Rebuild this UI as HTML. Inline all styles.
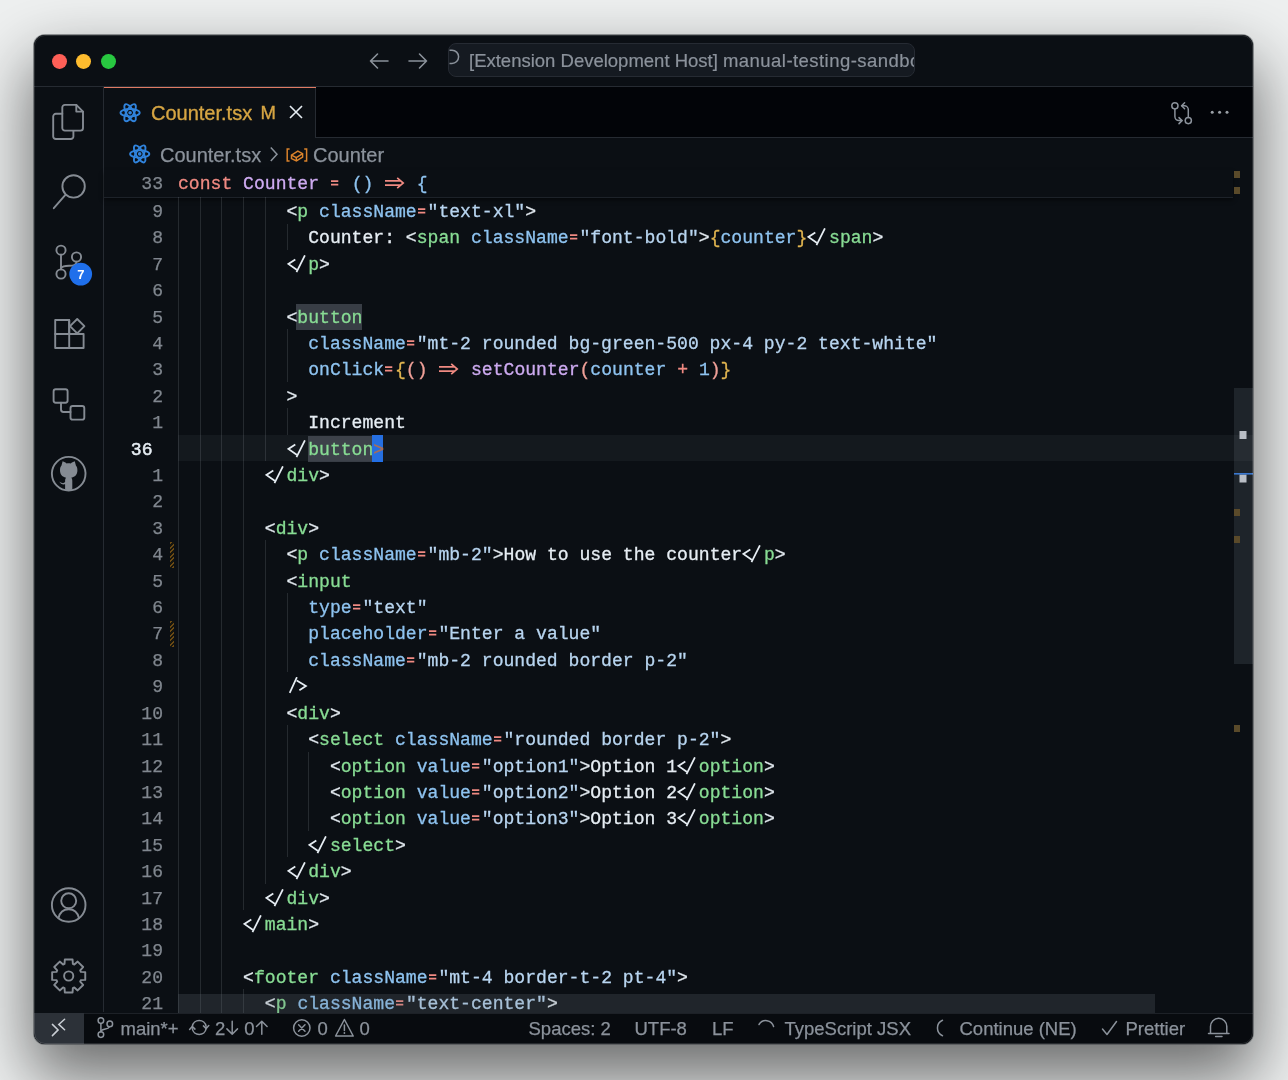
<!DOCTYPE html>
<html><head><meta charset="utf-8"><style>
html,body{margin:0;padding:0;}
body{width:1288px;height:1080px;overflow:hidden;position:relative;
 background:#eef0f0;
 font-family:"Liberation Sans",sans-serif;}
.win{will-change:transform;position:absolute;left:34px;top:35px;width:1219px;height:1009px;border-radius:11px;overflow:hidden;background:#0b0f14;
 box-shadow:0 0 0 1px rgba(60,64,68,0.5), 0 30px 65px 4px rgba(0,0,0,0.55);}
.edge{position:absolute;left:0;top:0;width:1217px;height:1007px;border:1px solid rgba(255,255,255,0.13);border-radius:11px;pointer-events:none;}
.abs{position:absolute;}
.title{position:absolute;left:0;top:0;width:1219px;height:51px;background:#0b0f14;border-bottom:1px solid #262b32;}
.tl{position:absolute;top:18.8px;width:14.8px;height:14.8px;border-radius:50%;}
.search{position:absolute;left:414px;top:8px;width:465px;height:32px;border:1px solid #262b33;border-radius:8px;background:#151a21;overflow:hidden;}
.search .txt{-webkit-text-stroke:0.2px currentColor;position:absolute;left:20px;top:6px;font-size:18.5px;color:#8b929b;white-space:nowrap;letter-spacing:0px;}
.abar{position:absolute;left:0;top:52px;width:69px;height:925px;background:#0b0f14;border-right:1px solid #262b32;}
.tabs{position:absolute;left:70px;top:52px;width:1149px;height:50px;background:#020408;border-bottom:1px solid #262b32;}
.tab{position:absolute;left:0;top:0;width:211px;height:51px;background:#0b0f14;border-right:1px solid #262b32;}
.tab .top{position:absolute;left:0;top:0;width:212px;height:1.2px;background:#e07a63;}
.crumb{-webkit-text-stroke:0.25px currentColor;position:absolute;left:70px;top:103px;font-size:20px;color:#8b929b;white-space:nowrap;}
.editor{position:absolute;left:70px;top:103px;width:1149px;height:874px;background:#0b0f14;overflow:hidden;}
.row{position:absolute;left:0;width:1219px;height:26.41px;}
.row.cur .hl{position:absolute;left:144px;top:0;width:1075px;height:26.41px;background:rgba(110,118,129,0.10);}
.ln{-webkit-text-stroke:0.25px currentColor;position:absolute;top:1.8px;left:0;width:129px;text-align:right;font-family:"Liberation Mono",monospace;font-size:18.08px;line-height:26.41px;color:#80878f;}
.ln.act{left:-10.5px;color:#e6edf3;-webkit-text-stroke:0.5px currentColor;}
.code{-webkit-text-stroke:0.3px currentColor;position:absolute;top:1.8px;font-family:"Liberation Mono",monospace;font-size:18.08px;line-height:26.41px;white-space:pre;}
.g{position:absolute;top:0;width:1px;height:26.41px;background:rgba(230,237,243,0.12);}
.eq{position:relative;color:transparent;-webkit-text-stroke:0;}
.eq svg{position:absolute;left:0;top:0;}
.status{position:absolute;left:0;top:977.6px;width:1219px;height:31.4px;background:#080b0f;border-top:1px solid #1d2127;font-size:18.5px;color:#8b929b;white-space:nowrap;}
.status span{position:absolute;top:4px;-webkit-text-stroke:0.25px currentColor;}
.ico{position:absolute;}
.ov{position:absolute;left:-34px;top:-35px;pointer-events:none;}
.tabtxt{-webkit-text-stroke:0.35px currentColor;position:absolute;left:47px;top:15px;font-size:20px;color:#d6a543;white-space:nowrap;}
.tabm{-webkit-text-stroke:0.35px currentColor;position:absolute;left:156.5px;top:15.2px;font-size:18.5px;color:#d6a543;}
.crumb{-webkit-text-stroke:0.25px currentColor;position:absolute;top:108.5px;font-size:20px;color:#8b929b;white-space:nowrap;}
.sticky{position:absolute;left:70px;top:134.5px;width:1129px;height:27px;background:#0b0f14;box-shadow:0 1px 0 #1d2229, 0 3px 4px rgba(0,0,0,0.5);}
.sticky .code, .sticky .ln{top:1.8px;}
.sticky .ln{left:-70px;}
.sticky .code{margin-left:-70px;}
.wordhl{position:absolute;height:26.41px;background:rgba(110,118,129,0.45);}
.cursor{position:absolute;width:11px;height:26.41px;background:#1f6feb;}
.hscroll{position:absolute;left:144px;top:959px;width:977px;height:18.5px;background:rgba(110,118,129,0.22);}
.vscroll{position:absolute;left:1199.7px;top:352.8px;width:19.3px;height:276px;background:rgba(110,118,129,0.2);}
.remote{position:absolute;left:0;top:-1px;width:49.6px;height:33px;background:#2c3138;}

.dirty{position:absolute;left:136px;width:4.4px;height:26.6px;background:repeating-linear-gradient(-45deg,#6b4a14 0px,#6b4a14 1.6px,#15150f 1.6px,#15150f 3.2px);}

</style></head><body>
<div class="win">
 <div class="title">
  <div class="tl" style="left:18px;background:#fe5f57"></div>
  <div class="tl" style="left:42.3px;background:#febc2e"></div>
  <div class="tl" style="left:66.9px;background:#28c840"></div>
  <div class="search">
   <div class="txt">[Extension Development Host] <span style="letter-spacing:0.45px">manual-testing-sandbox</span></div>
  </div>
 </div>
 <div class="abar"></div>
 <div class="tabs">
  <div class="tab"><div class="top"></div>
   <span class="tabtxt">Counter.tsx</span><span class="tabm">M</span>
  </div>
 </div>
 <div class="editor"></div>
 <span class="crumb" style="left:126px">Counter.tsx</span>
 <span class="crumb" style="left:279px">Counter</span>
 <div class="sticky">
  <span class="ln">33</span><span class="code" style="left:144px"><span style="color:#f08a82">const</span><span style="color:#e6edf3"> </span><span style="color:#cdaaf0">Counter</span><span style="color:#e6edf3"> </span><span class="eq">=<svg width="11" height="20" viewBox="0 0 11 20"><path d="M1 7.1H8.3M1 10.7H8.3" fill="none" stroke="#f08a82" stroke-width="1.7"/></svg></span><span style="color:#e6edf3"> </span><span style="color:#8ec3f0">(</span><span style="color:#8ec3f0">)</span><span style="color:#e6edf3"> </span><span class="eq">=&gt;<svg width="22" height="20" viewBox="0 0 22 20"><path d="M1 6.9H16.2M1 11.1H16.2M13.2 3.9L19.2 9L13.2 14.1" fill="none" stroke="#f08a82" stroke-width="1.7"/></svg></span><span style="color:#e6edf3"> </span><span style="color:#8ec3f0">{</span></span>
 </div>
 <div class="wordhl" style="left:262.3px;top:269px;width:65.3px;height:25.8px"></div>
 <div class="wordhl" style="left:274px;top:401px;width:64px;height:25.8px"></div>
 <div class="cursor" style="left:337.8px;top:399.6px;width:11.6px;height:27.4px"></div>
 <div class="row" style="top:162.1px"><i class="g" style="left:144px"></i><i class="g" style="left:165.7px"></i><i class="g" style="left:187.4px"></i><i class="g" style="left:209.1px"></i><i class="g" style="left:230.8px"></i><span class="ln">9</span><span class="code" style="left:252.5px"><span style="color:#e6edf3">&lt;</span><span style="color:#88dc94">p</span><span style="color:#e6edf3"> </span><span style="color:#8ec3f0">className</span><span class="eq">=<svg width="11" height="20" viewBox="0 0 11 20"><path d="M1 7.1H8.3M1 10.7H8.3" fill="none" stroke="#f08a82" stroke-width="1.7"/></svg></span><span style="color:#b8d5f0">&quot;text-xl&quot;</span><span style="color:#e6edf3">&gt;</span></span></div>
<div class="row" style="top:188.51px"><i class="g" style="left:144px"></i><i class="g" style="left:165.7px"></i><i class="g" style="left:187.4px"></i><i class="g" style="left:209.1px"></i><i class="g" style="left:230.8px"></i><i class="g" style="left:252.5px"></i><span class="ln">8</span><span class="code" style="left:274.2px"><span style="color:#e6edf3">Counter: </span><span style="color:#e6edf3">&lt;</span><span style="color:#88dc94">span</span><span style="color:#e6edf3"> </span><span style="color:#8ec3f0">className</span><span class="eq">=<svg width="11" height="20" viewBox="0 0 11 20"><path d="M1 7.1H8.3M1 10.7H8.3" fill="none" stroke="#f08a82" stroke-width="1.7"/></svg></span><span style="color:#b8d5f0">&quot;font-bold&quot;</span><span style="color:#e6edf3">&gt;</span><span style="color:#e0b450">{</span><span style="color:#8ec3f0">counter</span><span style="color:#e0b450">}</span><span class="eq">&lt;/<svg width="22" height="20" viewBox="0 0 22 20"><path d="M8.3 4.6L1.4 8.9L9.7 14.7M9.5 17.1L17.9 0.3" fill="none" stroke="#e6edf3" stroke-width="1.75" stroke-linejoin="miter"/></svg></span><span style="color:#88dc94">span</span><span style="color:#e6edf3">&gt;</span></span></div>
<div class="row" style="top:214.92px"><i class="g" style="left:144px"></i><i class="g" style="left:165.7px"></i><i class="g" style="left:187.4px"></i><i class="g" style="left:209.1px"></i><i class="g" style="left:230.8px"></i><span class="ln">7</span><span class="code" style="left:252.5px"><span class="eq">&lt;/<svg width="22" height="20" viewBox="0 0 22 20"><path d="M8.3 4.6L1.4 8.9L9.7 14.7M9.5 17.1L17.9 0.3" fill="none" stroke="#e6edf3" stroke-width="1.75" stroke-linejoin="miter"/></svg></span><span style="color:#88dc94">p</span><span style="color:#e6edf3">&gt;</span></span></div>
<div class="row" style="top:241.33px"><i class="g" style="left:144px"></i><i class="g" style="left:165.7px"></i><i class="g" style="left:187.4px"></i><i class="g" style="left:209.1px"></i><i class="g" style="left:230.8px"></i><span class="ln">6</span><span class="code" style="left:144px"></span></div>
<div class="row" style="top:267.74px"><i class="g" style="left:144px"></i><i class="g" style="left:165.7px"></i><i class="g" style="left:187.4px"></i><i class="g" style="left:209.1px"></i><i class="g" style="left:230.8px"></i><span class="ln">5</span><span class="code" style="left:252.5px"><span style="color:#e6edf3">&lt;</span><span style="color:#88dc94">button</span></span></div>
<div class="row" style="top:294.15px"><i class="g" style="left:144px"></i><i class="g" style="left:165.7px"></i><i class="g" style="left:187.4px"></i><i class="g" style="left:209.1px"></i><i class="g" style="left:230.8px"></i><i class="g" style="left:252.5px"></i><span class="ln">4</span><span class="code" style="left:274.2px"><span style="color:#8ec3f0">className</span><span class="eq">=<svg width="11" height="20" viewBox="0 0 11 20"><path d="M1 7.1H8.3M1 10.7H8.3" fill="none" stroke="#f08a82" stroke-width="1.7"/></svg></span><span style="color:#b8d5f0">&quot;mt-2 rounded bg-green-500 px-4 py-2 text-white&quot;</span></span></div>
<div class="row" style="top:320.56px"><i class="g" style="left:144px"></i><i class="g" style="left:165.7px"></i><i class="g" style="left:187.4px"></i><i class="g" style="left:209.1px"></i><i class="g" style="left:230.8px"></i><i class="g" style="left:252.5px"></i><span class="ln">3</span><span class="code" style="left:274.2px"><span style="color:#8ec3f0">onClick</span><span class="eq">=<svg width="11" height="20" viewBox="0 0 11 20"><path d="M1 7.1H8.3M1 10.7H8.3" fill="none" stroke="#f08a82" stroke-width="1.7"/></svg></span><span style="color:#e0b450">{</span><span style="color:#f0a098">(</span><span style="color:#f0a098">)</span><span style="color:#e6edf3"> </span><span class="eq">=&gt;<svg width="22" height="20" viewBox="0 0 22 20"><path d="M1 6.9H16.2M1 11.1H16.2M13.2 3.9L19.2 9L13.2 14.1" fill="none" stroke="#f08a82" stroke-width="1.7"/></svg></span><span style="color:#e6edf3"> </span><span style="color:#cdaaf0">setCounter</span><span style="color:#f0a098">(</span><span style="color:#8ec3f0">counter</span><span style="color:#e6edf3"> </span><span style="color:#f08a82">+</span><span style="color:#e6edf3"> </span><span style="color:#8ec3f0">1</span><span style="color:#f0a098">)</span><span style="color:#e0b450">}</span></span></div>
<div class="row" style="top:346.97px"><i class="g" style="left:144px"></i><i class="g" style="left:165.7px"></i><i class="g" style="left:187.4px"></i><i class="g" style="left:209.1px"></i><i class="g" style="left:230.8px"></i><span class="ln">2</span><span class="code" style="left:252.5px"><span style="color:#e6edf3">&gt;</span></span></div>
<div class="row" style="top:373.38px"><i class="g" style="left:144px"></i><i class="g" style="left:165.7px"></i><i class="g" style="left:187.4px"></i><i class="g" style="left:209.1px"></i><i class="g" style="left:230.8px"></i><i class="g" style="left:252.5px"></i><span class="ln">1</span><span class="code" style="left:274.2px"><span style="color:#e6edf3">Increment</span></span></div>
<div class="row cur" style="top:399.79px"><i class="hl"></i><i class="g" style="left:144px"></i><i class="g" style="left:165.7px"></i><i class="g" style="left:187.4px"></i><i class="g" style="left:209.1px"></i><i class="g" style="left:230.8px"></i><span class="ln act">36</span><span class="code" style="left:252.5px"><span class="eq">&lt;/<svg width="22" height="20" viewBox="0 0 22 20"><path d="M8.3 4.6L1.4 8.9L9.7 14.7M9.5 17.1L17.9 0.3" fill="none" stroke="#e6edf3" stroke-width="1.75" stroke-linejoin="miter"/></svg></span><span style="color:#88dc94">button</span><span style="color:#b07050">&gt;</span></span></div>
<div class="row" style="top:426.2px"><i class="g" style="left:144px"></i><i class="g" style="left:165.7px"></i><i class="g" style="left:187.4px"></i><i class="g" style="left:209.1px"></i><span class="ln">1</span><span class="code" style="left:230.8px"><span class="eq">&lt;/<svg width="22" height="20" viewBox="0 0 22 20"><path d="M8.3 4.6L1.4 8.9L9.7 14.7M9.5 17.1L17.9 0.3" fill="none" stroke="#e6edf3" stroke-width="1.75" stroke-linejoin="miter"/></svg></span><span style="color:#88dc94">div</span><span style="color:#e6edf3">&gt;</span></span></div>
<div class="row" style="top:452.61px"><i class="g" style="left:144px"></i><i class="g" style="left:165.7px"></i><i class="g" style="left:187.4px"></i><i class="g" style="left:209.1px"></i><span class="ln">2</span><span class="code" style="left:144px"></span></div>
<div class="row" style="top:479.02px"><i class="g" style="left:144px"></i><i class="g" style="left:165.7px"></i><i class="g" style="left:187.4px"></i><i class="g" style="left:209.1px"></i><span class="ln">3</span><span class="code" style="left:230.8px"><span style="color:#e6edf3">&lt;</span><span style="color:#88dc94">div</span><span style="color:#e6edf3">&gt;</span></span></div>
<div class="row" style="top:505.43px"><i class="g" style="left:144px"></i><i class="g" style="left:165.7px"></i><i class="g" style="left:187.4px"></i><i class="g" style="left:209.1px"></i><i class="g" style="left:230.8px"></i><span class="ln">4</span><span class="code" style="left:252.5px"><span style="color:#e6edf3">&lt;</span><span style="color:#88dc94">p</span><span style="color:#e6edf3"> </span><span style="color:#8ec3f0">className</span><span class="eq">=<svg width="11" height="20" viewBox="0 0 11 20"><path d="M1 7.1H8.3M1 10.7H8.3" fill="none" stroke="#f08a82" stroke-width="1.7"/></svg></span><span style="color:#b8d5f0">&quot;mb-2&quot;</span><span style="color:#e6edf3">&gt;</span><span style="color:#e6edf3">How to use the counter</span><span class="eq">&lt;/<svg width="22" height="20" viewBox="0 0 22 20"><path d="M8.3 4.6L1.4 8.9L9.7 14.7M9.5 17.1L17.9 0.3" fill="none" stroke="#e6edf3" stroke-width="1.75" stroke-linejoin="miter"/></svg></span><span style="color:#88dc94">p</span><span style="color:#e6edf3">&gt;</span></span></div>
<div class="row" style="top:531.84px"><i class="g" style="left:144px"></i><i class="g" style="left:165.7px"></i><i class="g" style="left:187.4px"></i><i class="g" style="left:209.1px"></i><i class="g" style="left:230.8px"></i><span class="ln">5</span><span class="code" style="left:252.5px"><span style="color:#e6edf3">&lt;</span><span style="color:#88dc94">input</span></span></div>
<div class="row" style="top:558.25px"><i class="g" style="left:144px"></i><i class="g" style="left:165.7px"></i><i class="g" style="left:187.4px"></i><i class="g" style="left:209.1px"></i><i class="g" style="left:230.8px"></i><i class="g" style="left:252.5px"></i><span class="ln">6</span><span class="code" style="left:274.2px"><span style="color:#8ec3f0">type</span><span class="eq">=<svg width="11" height="20" viewBox="0 0 11 20"><path d="M1 7.1H8.3M1 10.7H8.3" fill="none" stroke="#f08a82" stroke-width="1.7"/></svg></span><span style="color:#b8d5f0">&quot;text&quot;</span></span></div>
<div class="row" style="top:584.66px"><i class="g" style="left:144px"></i><i class="g" style="left:165.7px"></i><i class="g" style="left:187.4px"></i><i class="g" style="left:209.1px"></i><i class="g" style="left:230.8px"></i><i class="g" style="left:252.5px"></i><span class="ln">7</span><span class="code" style="left:274.2px"><span style="color:#8ec3f0">placeholder</span><span class="eq">=<svg width="11" height="20" viewBox="0 0 11 20"><path d="M1 7.1H8.3M1 10.7H8.3" fill="none" stroke="#f08a82" stroke-width="1.7"/></svg></span><span style="color:#b8d5f0">&quot;Enter a value&quot;</span></span></div>
<div class="row" style="top:611.07px"><i class="g" style="left:144px"></i><i class="g" style="left:165.7px"></i><i class="g" style="left:187.4px"></i><i class="g" style="left:209.1px"></i><i class="g" style="left:230.8px"></i><i class="g" style="left:252.5px"></i><span class="ln">8</span><span class="code" style="left:274.2px"><span style="color:#8ec3f0">className</span><span class="eq">=<svg width="11" height="20" viewBox="0 0 11 20"><path d="M1 7.1H8.3M1 10.7H8.3" fill="none" stroke="#f08a82" stroke-width="1.7"/></svg></span><span style="color:#b8d5f0">&quot;mb-2 rounded border p-2&quot;</span></span></div>
<div class="row" style="top:637.48px"><i class="g" style="left:144px"></i><i class="g" style="left:165.7px"></i><i class="g" style="left:187.4px"></i><i class="g" style="left:209.1px"></i><i class="g" style="left:230.8px"></i><span class="ln">9</span><span class="code" style="left:252.5px"><span class="eq">/&gt;<svg width="22" height="20" viewBox="0 0 22 20"><path d="M2.7 15.9L9.9 0.2M9.7 3.6L18.9 9.1L12.4 13.2" fill="none" stroke="#e6edf3" stroke-width="1.75"/></svg></span></span></div>
<div class="row" style="top:663.89px"><i class="g" style="left:144px"></i><i class="g" style="left:165.7px"></i><i class="g" style="left:187.4px"></i><i class="g" style="left:209.1px"></i><i class="g" style="left:230.8px"></i><span class="ln">10</span><span class="code" style="left:252.5px"><span style="color:#e6edf3">&lt;</span><span style="color:#88dc94">div</span><span style="color:#e6edf3">&gt;</span></span></div>
<div class="row" style="top:690.3px"><i class="g" style="left:144px"></i><i class="g" style="left:165.7px"></i><i class="g" style="left:187.4px"></i><i class="g" style="left:209.1px"></i><i class="g" style="left:230.8px"></i><i class="g" style="left:252.5px"></i><span class="ln">11</span><span class="code" style="left:274.2px"><span style="color:#e6edf3">&lt;</span><span style="color:#88dc94">select</span><span style="color:#e6edf3"> </span><span style="color:#8ec3f0">className</span><span class="eq">=<svg width="11" height="20" viewBox="0 0 11 20"><path d="M1 7.1H8.3M1 10.7H8.3" fill="none" stroke="#f08a82" stroke-width="1.7"/></svg></span><span style="color:#b8d5f0">&quot;rounded border p-2&quot;</span><span style="color:#e6edf3">&gt;</span></span></div>
<div class="row" style="top:716.71px"><i class="g" style="left:144px"></i><i class="g" style="left:165.7px"></i><i class="g" style="left:187.4px"></i><i class="g" style="left:209.1px"></i><i class="g" style="left:230.8px"></i><i class="g" style="left:252.5px"></i><i class="g" style="left:274.2px"></i><span class="ln">12</span><span class="code" style="left:295.9px"><span style="color:#e6edf3">&lt;</span><span style="color:#88dc94">option</span><span style="color:#e6edf3"> </span><span style="color:#8ec3f0">value</span><span class="eq">=<svg width="11" height="20" viewBox="0 0 11 20"><path d="M1 7.1H8.3M1 10.7H8.3" fill="none" stroke="#f08a82" stroke-width="1.7"/></svg></span><span style="color:#b8d5f0">&quot;option1&quot;</span><span style="color:#e6edf3">&gt;</span><span style="color:#e6edf3">Option 1</span><span class="eq">&lt;/<svg width="22" height="20" viewBox="0 0 22 20"><path d="M8.3 4.6L1.4 8.9L9.7 14.7M9.5 17.1L17.9 0.3" fill="none" stroke="#e6edf3" stroke-width="1.75" stroke-linejoin="miter"/></svg></span><span style="color:#88dc94">option</span><span style="color:#e6edf3">&gt;</span></span></div>
<div class="row" style="top:743.12px"><i class="g" style="left:144px"></i><i class="g" style="left:165.7px"></i><i class="g" style="left:187.4px"></i><i class="g" style="left:209.1px"></i><i class="g" style="left:230.8px"></i><i class="g" style="left:252.5px"></i><i class="g" style="left:274.2px"></i><span class="ln">13</span><span class="code" style="left:295.9px"><span style="color:#e6edf3">&lt;</span><span style="color:#88dc94">option</span><span style="color:#e6edf3"> </span><span style="color:#8ec3f0">value</span><span class="eq">=<svg width="11" height="20" viewBox="0 0 11 20"><path d="M1 7.1H8.3M1 10.7H8.3" fill="none" stroke="#f08a82" stroke-width="1.7"/></svg></span><span style="color:#b8d5f0">&quot;option2&quot;</span><span style="color:#e6edf3">&gt;</span><span style="color:#e6edf3">Option 2</span><span class="eq">&lt;/<svg width="22" height="20" viewBox="0 0 22 20"><path d="M8.3 4.6L1.4 8.9L9.7 14.7M9.5 17.1L17.9 0.3" fill="none" stroke="#e6edf3" stroke-width="1.75" stroke-linejoin="miter"/></svg></span><span style="color:#88dc94">option</span><span style="color:#e6edf3">&gt;</span></span></div>
<div class="row" style="top:769.53px"><i class="g" style="left:144px"></i><i class="g" style="left:165.7px"></i><i class="g" style="left:187.4px"></i><i class="g" style="left:209.1px"></i><i class="g" style="left:230.8px"></i><i class="g" style="left:252.5px"></i><i class="g" style="left:274.2px"></i><span class="ln">14</span><span class="code" style="left:295.9px"><span style="color:#e6edf3">&lt;</span><span style="color:#88dc94">option</span><span style="color:#e6edf3"> </span><span style="color:#8ec3f0">value</span><span class="eq">=<svg width="11" height="20" viewBox="0 0 11 20"><path d="M1 7.1H8.3M1 10.7H8.3" fill="none" stroke="#f08a82" stroke-width="1.7"/></svg></span><span style="color:#b8d5f0">&quot;option3&quot;</span><span style="color:#e6edf3">&gt;</span><span style="color:#e6edf3">Option 3</span><span class="eq">&lt;/<svg width="22" height="20" viewBox="0 0 22 20"><path d="M8.3 4.6L1.4 8.9L9.7 14.7M9.5 17.1L17.9 0.3" fill="none" stroke="#e6edf3" stroke-width="1.75" stroke-linejoin="miter"/></svg></span><span style="color:#88dc94">option</span><span style="color:#e6edf3">&gt;</span></span></div>
<div class="row" style="top:795.94px"><i class="g" style="left:144px"></i><i class="g" style="left:165.7px"></i><i class="g" style="left:187.4px"></i><i class="g" style="left:209.1px"></i><i class="g" style="left:230.8px"></i><i class="g" style="left:252.5px"></i><span class="ln">15</span><span class="code" style="left:274.2px"><span class="eq">&lt;/<svg width="22" height="20" viewBox="0 0 22 20"><path d="M8.3 4.6L1.4 8.9L9.7 14.7M9.5 17.1L17.9 0.3" fill="none" stroke="#e6edf3" stroke-width="1.75" stroke-linejoin="miter"/></svg></span><span style="color:#88dc94">select</span><span style="color:#e6edf3">&gt;</span></span></div>
<div class="row" style="top:822.35px"><i class="g" style="left:144px"></i><i class="g" style="left:165.7px"></i><i class="g" style="left:187.4px"></i><i class="g" style="left:209.1px"></i><i class="g" style="left:230.8px"></i><span class="ln">16</span><span class="code" style="left:252.5px"><span class="eq">&lt;/<svg width="22" height="20" viewBox="0 0 22 20"><path d="M8.3 4.6L1.4 8.9L9.7 14.7M9.5 17.1L17.9 0.3" fill="none" stroke="#e6edf3" stroke-width="1.75" stroke-linejoin="miter"/></svg></span><span style="color:#88dc94">div</span><span style="color:#e6edf3">&gt;</span></span></div>
<div class="row" style="top:848.76px"><i class="g" style="left:144px"></i><i class="g" style="left:165.7px"></i><i class="g" style="left:187.4px"></i><i class="g" style="left:209.1px"></i><span class="ln">17</span><span class="code" style="left:230.8px"><span class="eq">&lt;/<svg width="22" height="20" viewBox="0 0 22 20"><path d="M8.3 4.6L1.4 8.9L9.7 14.7M9.5 17.1L17.9 0.3" fill="none" stroke="#e6edf3" stroke-width="1.75" stroke-linejoin="miter"/></svg></span><span style="color:#88dc94">div</span><span style="color:#e6edf3">&gt;</span></span></div>
<div class="row" style="top:875.17px"><i class="g" style="left:144px"></i><i class="g" style="left:165.7px"></i><i class="g" style="left:187.4px"></i><span class="ln">18</span><span class="code" style="left:209.1px"><span class="eq">&lt;/<svg width="22" height="20" viewBox="0 0 22 20"><path d="M8.3 4.6L1.4 8.9L9.7 14.7M9.5 17.1L17.9 0.3" fill="none" stroke="#e6edf3" stroke-width="1.75" stroke-linejoin="miter"/></svg></span><span style="color:#88dc94">main</span><span style="color:#e6edf3">&gt;</span></span></div>
<div class="row" style="top:901.58px"><i class="g" style="left:144px"></i><i class="g" style="left:165.7px"></i><i class="g" style="left:187.4px"></i><span class="ln">19</span><span class="code" style="left:144px"></span></div>
<div class="row" style="top:927.99px"><i class="g" style="left:144px"></i><i class="g" style="left:165.7px"></i><i class="g" style="left:187.4px"></i><span class="ln">20</span><span class="code" style="left:209.1px"><span style="color:#e6edf3">&lt;</span><span style="color:#88dc94">footer</span><span style="color:#e6edf3"> </span><span style="color:#8ec3f0">className</span><span class="eq">=<svg width="11" height="20" viewBox="0 0 11 20"><path d="M1 7.1H8.3M1 10.7H8.3" fill="none" stroke="#f08a82" stroke-width="1.7"/></svg></span><span style="color:#b8d5f0">&quot;mt-4 border-t-2 pt-4&quot;</span><span style="color:#e6edf3">&gt;</span></span></div>
<div class="row" style="top:954.4px"><i class="g" style="left:144px"></i><i class="g" style="left:165.7px"></i><i class="g" style="left:187.4px"></i><i class="g" style="left:209.1px"></i><span class="ln">21</span><span class="code" style="left:230.8px"><span style="color:#e6edf3">&lt;</span><span style="color:#88dc94">p</span><span style="color:#e6edf3"> </span><span style="color:#8ec3f0">className</span><span class="eq">=<svg width="11" height="20" viewBox="0 0 11 20"><path d="M1 7.1H8.3M1 10.7H8.3" fill="none" stroke="#f08a82" stroke-width="1.7"/></svg></span><span style="color:#b8d5f0">&quot;text-center&quot;</span><span style="color:#e6edf3">&gt;</span></span></div>
  <div class="dirty" style="top:506.5px"></div>
 <div class="dirty" style="top:585.5px"></div>
 <div class="hscroll"></div>
 <div class="vscroll"></div>
 <div class="status">
  <div class="remote"></div>
  <span style="left:86.5px">main*+</span>
  <span style="left:181px">2</span><span style="left:210.3px">0</span>
  <span style="left:283.5px">0</span>
  <span style="left:325.5px">0</span>
  <span style="left:494.5px">Spaces: 2</span>
  <span style="left:600.5px">UTF-8</span>
  <span style="left:678px">LF</span>
  <span style="left:750.5px">TypeScript JSX</span>
  <span style="left:925.5px">Continue (NE)</span>
  <span style="left:1091.5px">Prettier</span>
 </div>
 <svg class="ov" width="1288" height="1080" viewBox="0 0 1288 1080">
  <g fill="none" stroke="#8b929b" stroke-width="1.6" stroke-linecap="round" stroke-linejoin="round">
   <!-- nav arrows -->
   <path d="M370.5 61H388M377.5 54L370.5 61L377.5 68"/>
   <path d="M409 61H426.5M419.5 54L426.5 61L419.5 68"/>
  </g>
  <!-- search icon clipped -->
  <path d="M449.5 50.2H452a6.6 6.6 0 0 1 0 13.2H449.5" fill="none" stroke="#8b929b" stroke-width="1.5"/>
  <g fill="none" stroke="#858b93" stroke-width="1.9" stroke-linejoin="round" stroke-linecap="round">
   <!-- files -->
   <path d="M62.3 113.8H55.8a2.6 2.6 0 0 0 -2.6 2.6V136.4a2.6 2.6 0 0 0 2.6 2.6H70.8a2.6 2.6 0 0 0 2.6 -2.6V131"/>
   <path d="M64.9 104.9H76.3L83 111.6V128a2.6 2.6 0 0 1 -2.6 2.6H64.9a2.6 2.6 0 0 1 -2.6 -2.6V107.5a2.6 2.6 0 0 1 2.6 -2.6Z"/>
   <path d="M76.3 104.9V111.6H83"/>
   <!-- search -->
   <circle cx="73.6" cy="186.4" r="11.2"/>
   <path d="M65.4 194.8L53.8 208.2"/>
   <!-- source control -->
   <circle cx="61" cy="250.2" r="4.6"/>
   <circle cx="76.5" cy="257" r="4.6"/>
   <circle cx="61" cy="274" r="4.6"/>
   <path d="M61 254.8V269.4"/>
   <path d="M76.5 261.6C76.5 266.5 71 265.5 66 266C62.5 266.4 61 267.5 61 269"/>
   <!-- extensions -->
   <path d="M55.2 320H69.2V348H55.2Z"/>
   <path d="M55.2 334H83.6V348H69.2"/>
   <path d="M69.2 334V320"/>
   <path d="M77.2 319L84.4 326.2L77.2 333.4L70 326.2Z"/>
   <!-- remote explorer -->
   <rect x="53.6" y="389.2" width="14" height="13.6" rx="2.2"/>
   <rect x="70.5" y="406" width="13.8" height="13.6" rx="2.2"/>
   <path d="M61 402.8V409.6a2.4 2.4 0 0 0 2.4 2.4H70.5"/>
   <!-- github -->
   <circle cx="68.7" cy="473.7" r="16.8"/>
   <!-- account -->
   <circle cx="68.7" cy="905" r="16.8"/>
   <circle cx="68.7" cy="900.8" r="7.5"/>
   <path d="M58.4 918.2C60 911.5 64 909.3 68.7 909.3C73.4 909.3 77.4 911.5 79 918.2"/>
   <!-- gear -->
   <path d="M80.81 971.85 L85.25 972.12 L85.25 979.88 L80.81 980.15 L80.20 981.63 L83.14 984.96 L77.66 990.44 L74.33 987.50 L72.85 988.11 L72.58 992.55 L64.82 992.55 L64.55 988.11 L63.07 987.50 L59.74 990.44 L54.26 984.96 L57.20 981.63 L56.59 980.15 L52.15 979.88 L52.15 972.12 L56.59 971.85 L57.20 970.37 L54.26 967.04 L59.74 961.56 L63.07 964.50 L64.55 963.89 L64.82 959.45 L72.58 959.45 L72.85 963.89 L74.33 964.50 L77.66 961.56 L83.14 967.04 L80.20 970.37Z"/>
   <circle cx="68.7" cy="976" r="4.6"/>
  </g>
  <!-- octocat -->
  <path fill="#858b93" d="M61.5 465.5L62.6 461.2C64.2 461.6 65.8 462.6 66.6 463.5C68 463.2 69.4 463.2 70.8 463.5C71.6 462.6 73.2 461.6 74.8 461.2L75.9 465.5C77 466.8 77.4 468.3 77.4 470.2C77.4 475.5 74.2 477.2 71.2 477.7C72 478.4 72.3 479.5 72.3 480.8V489.8C70 490.4 67.4 490.4 65.1 489.8V484.3C62.6 484.8 60.4 483.9 59.3 481.5C60.2 482.1 61.2 482.9 62.2 483.1C63.4 483.3 64.4 482.8 65.1 482.1V480.8C65.1 479.5 65.4 478.4 66.2 477.7C63.2 477.2 60 475.5 60 470.2C60 468.3 60.4 466.8 61.5 465.5Z"/>
  <!-- badge -->
  <circle cx="80.7" cy="274.1" r="11.4" fill="#1f6feb"/>
  <text x="80.9" y="279.3" font-family="Liberation Sans" font-weight="bold" font-size="13" fill="#fff" text-anchor="middle">7</text>
  <!-- react icons -->
  <g fill="none" stroke="#3083dc" stroke-width="1.9">
   <g transform="translate(130.1 112.7)"><ellipse rx="9.6" ry="3.7"/><ellipse rx="9.6" ry="3.7" transform="rotate(60)"/><ellipse rx="9.6" ry="3.7" transform="rotate(120)"/><circle r="1.8" fill="#3083dc" stroke="none"/></g>
   <g transform="translate(139.7 153.9)"><ellipse rx="9.6" ry="3.7"/><ellipse rx="9.6" ry="3.7" transform="rotate(60)"/><ellipse rx="9.6" ry="3.7" transform="rotate(120)"/><circle r="1.8" fill="#3083dc" stroke="none"/></g>
  </g>
  <!-- tab close -->
  <path d="M290 106L302 118M302 106L290 118" stroke="#e6edf3" stroke-width="1.6" fill="none"/>
  <!-- breadcrumb chevron -->
  <path d="M270.8 147.5L277 154.2L270.8 161" stroke="#8b929b" stroke-width="1.5" fill="none"/>
  <!-- symbol variable icon -->
  <g fill="none" stroke="#d9822b" stroke-width="1.5">
   <path d="M289.6 149H287.2V161H289.6"/>
   <path d="M304.2 149H306.6V161H304.2"/>
   <path d="M291.5 155.2L297.8 151.2L302.6 153.6V157.2L296.4 161L291.5 158.6Z"/>
   <path d="M291.5 155.2L296.3 157.6L302.6 153.6M296.3 157.6V161"/>
  </g>
  <!-- compare changes icon -->
  <g fill="none" stroke="#8b929b" stroke-width="1.5" stroke-linecap="round" stroke-linejoin="round">
   <circle cx="1174.9" cy="105.8" r="3.1"/>
   <circle cx="1188.3" cy="120.6" r="3.1"/>
   <path d="M1174.9 108.9V116.6a4 4 0 0 0 4 4H1182"/>
   <path d="M1179 117.6L1182 120.6L1179 123.6"/>
   <path d="M1188.3 117.5V109.8a4 4 0 0 0 -4 -4H1181.6"/>
   <path d="M1184.6 102.8L1181.6 105.8L1184.6 108.8"/>
  </g>
  <g fill="#9aa0a6"><circle cx="1212.2" cy="112.2" r="1.5"/><circle cx="1219.6" cy="112.2" r="1.5"/><circle cx="1227" cy="112.2" r="1.5"/></g>
  <!-- status bar icons -->
  <g fill="none" stroke="#c9ced4" stroke-width="1.5" stroke-linecap="round">
   <path d="M52.4 1024.4L58.1 1029.9L52.4 1035.6"/>
   <path d="M64.6 1019.2L58.8 1024.4L64.6 1029.8"/>
  </g>
  <g fill="none" stroke="#8b929b" stroke-width="1.5" stroke-linecap="round" stroke-linejoin="round">
   <circle cx="100.9" cy="1020.6" r="2.8"/>
   <circle cx="109.8" cy="1023.9" r="2.8"/>
   <circle cx="100.9" cy="1034.6" r="2.8"/>
   <path d="M100.9 1023.4V1031.8"/>
   <path d="M109.4 1026.7C108.6 1028.6 106.5 1028.8 104.5 1029.3C102.3 1029.8 100.9 1030.6 100.9 1031.8"/>
   <!-- sync -->
   <path d="M192.3 1026.3A7 7 0 0 1 206.1 1026.3"/>
   <path d="M206.1 1028.7A7 7 0 0 1 192.3 1028.7"/>
   <path d="M203.4 1025.9L206.2 1028.6L208.8 1025.6"/>
   <path d="M195 1029.1L192.2 1026.4L189.6 1029.4"/>
   <path d="M232.2 1021.2V1034.2M226.9 1028.9L232.2 1034.2L237.5 1028.9"/><path d="M261.8 1034.2V1021.2M256.5 1026.5L261.8 1021.2L267.1 1026.5"/>
   <!-- error -->
   <circle cx="301.8" cy="1028" r="8.2"/>
   <path d="M298.6 1024.8L305 1031.2M305 1024.8L298.6 1031.2"/>
   <!-- warning -->
   <path d="M344.4 1019.5L353.2 1036H335.6Z"/>
   <path d="M344.4 1025V1030.5"/>
   <!-- spinner -->
   <path d="M759 1024.5A8 8 0 0 1 773.6 1026.5"/>
   <!-- crescent -->
   <path d="M942.5 1020.3A8.4 8.4 0 0 0 942.5 1035.7"/>
   <!-- check -->
   <path d="M1102.5 1029L1107 1034.5L1116.5 1021.5"/>
   <!-- bell -->
   <path d="M1208.5 1033.5H1229M1210.5 1033.5V1026.5A8 8 0 0 1 1226.8 1026.5V1033.5M1215.6 1036.6H1222"/>
  </g>
  <circle cx="344.4" cy="1033" r="0.9" fill="#8b929b"/>
  <!-- overview ruler markers -->
  <g fill="#5a4a2a">
   <rect x="1234" y="171" width="6" height="7"/><rect x="1234" y="187" width="6" height="7"/>
   <rect x="1234" y="509" width="6" height="7"/><rect x="1234" y="536" width="6" height="7"/><rect x="1234" y="725" width="6" height="7"/>
  </g>
  <rect x="1239.5" y="431" width="7" height="8" fill="#b9bec5"/>
  <rect x="1239.5" y="474.5" width="7" height="8" fill="#b9bec5"/>
  <rect x="1234" y="473" width="19" height="1.6" fill="#3a78d0"/>
 </svg>
 <div class="edge"></div>
</div>

</body></html>
